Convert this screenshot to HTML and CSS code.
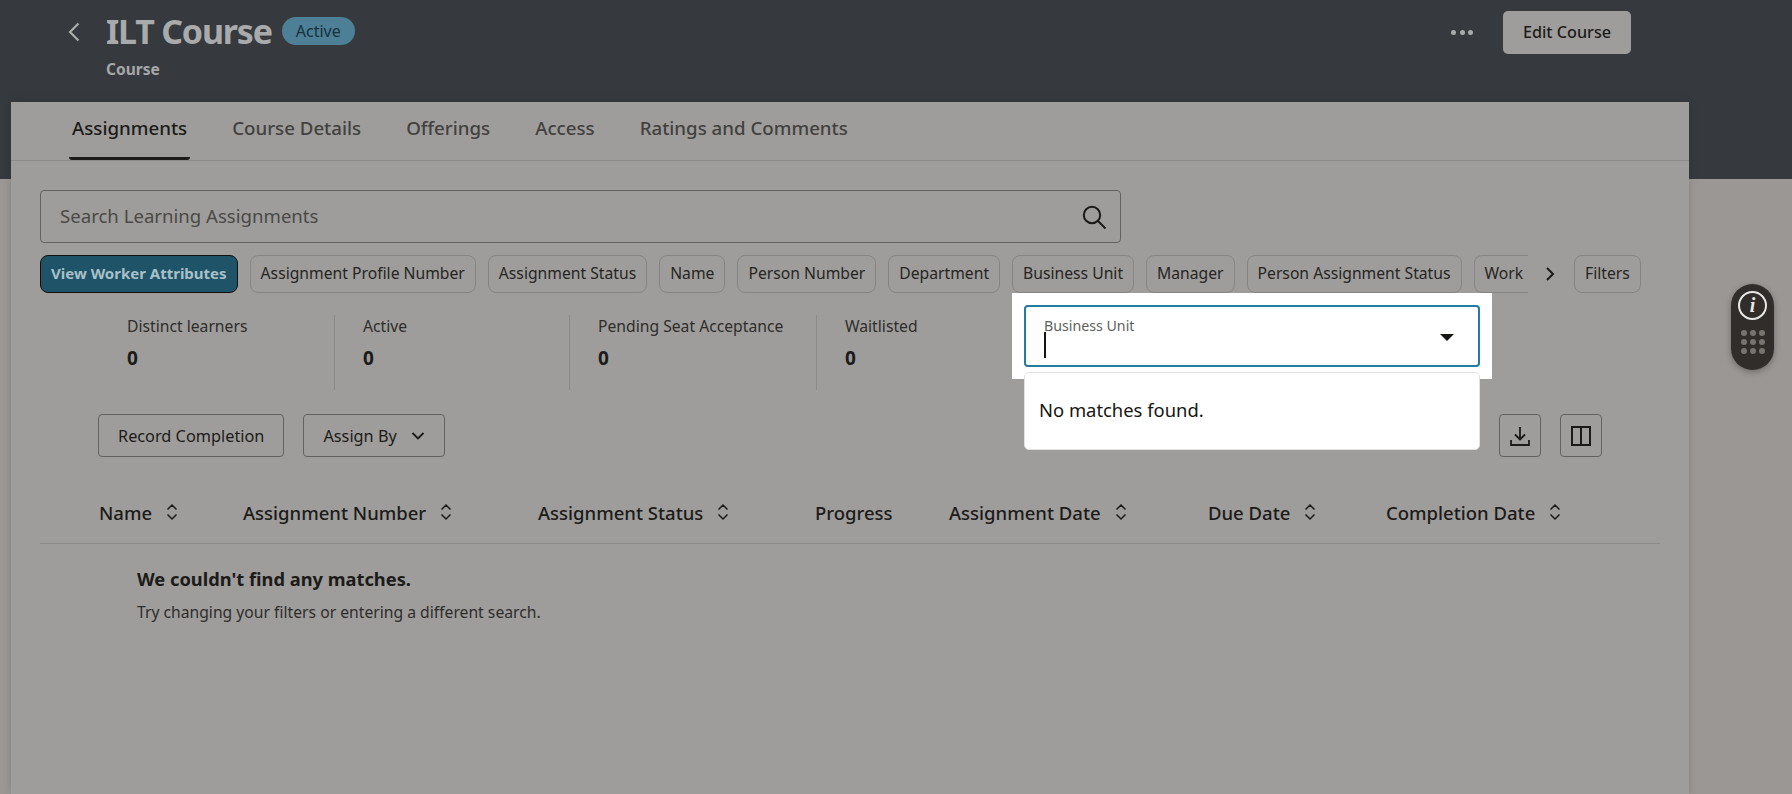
FILE: index.html
```html
<!DOCTYPE html>
<html>
<head>
    <link rel="stylesheet" href="styles.css">
</head>
<body>
    <div class="page">
        <div class="page-header">
            <button class="back-btn">
                <svg width="14" height="20" viewBox="0 0 14 20"><path d="M11.5 1.5 3 10l8.5 8.5" fill="none" stroke="#ababac" stroke-width="2.2"/></svg>
            </button>
            <div class="title-block">
                <div class="title-row">
                    <h1 class="page-title">ILT Course</h1>
                    <span class="status-badge">Active</span>
                </div>
                <div class="page-subtitle">Course</div>
            </div>
            <div class="header-actions">
                <div class="more-dots"><span></span><span></span><span></span></div>
                <button class="edit-btn">Edit Course</button>
            </div>
        </div>

        <div class="panel">
            <div class="tabs">
                <div class="tab tab-active">Assignments</div>
                <div class="tab">Course Details</div>
                <div class="tab">Offerings</div>
                <div class="tab">Access</div>
                <div class="tab">Ratings and Comments</div>
            </div>

            <div class="search-box">
                <span class="search-text">Search Learning Assignments</span>
                <svg width="26" height="26" viewBox="0 0 26 26"><circle cx="11" cy="11" r="8.2" fill="none" stroke="#1b1a19" stroke-width="2"/><path d="m17 17 7.5 7.5" stroke="#1b1a19" stroke-width="2" fill="none"/></svg>
            </div>

            <div class="chip-row">
                <div class="chip-scroll">
                    <div class="chip chip-primary">View Worker Attributes</div>
                    <div class="chip">Assignment Profile Number</div>
                    <div class="chip">Assignment Status</div>
                    <div class="chip">Name</div>
                    <div class="chip">Person Number</div>
                    <div class="chip">Department</div>
                    <div class="chip">Business Unit</div>
                    <div class="chip">Manager</div>
                    <div class="chip">Person Assignment Status</div>
                    <div class="chip chip-cut">Work</div>
                </div>
                <svg class="chip-next" width="12" height="16" viewBox="0 0 12 16"><path d="m3 2 6 6-6 6" fill="none" stroke="#1b1a19" stroke-width="2"/></svg>
                <div class="chip">Filters</div>
            </div>

            <div class="stats">
                <div class="stat stat-1"><div class="stat-label">Distinct learners</div><div class="stat-value">0</div></div>
                <div class="stat stat-2"><div class="stat-label">Active</div><div class="stat-value">0</div></div>
                <div class="stat stat-3"><div class="stat-label">Pending Seat Acceptance</div><div class="stat-value">0</div></div>
                <div class="stat stat-4"><div class="stat-label">Waitlisted</div><div class="stat-value">0</div></div>
            </div>

            <div class="toolbar">
                <button class="tool-btn">Record Completion</button>
                <button class="tool-btn">Assign By
                    <svg width="14" height="10" viewBox="0 0 14 10"><path d="m1.5 2 5.5 5.500 5.500-5.500" fill="none" stroke="#1b1a19" stroke-width="1.800"/></svg>
                </button>
                <div class="toolbar-right">
                    <button class="icon-btn">
                        <svg width="22" height="22" viewBox="0 0 22 22"><path d="M11 2v12M6 9.500l5 5 5-5M2 15v5h18v-5" fill="none" stroke="#1b1a19" stroke-width="1.800"/></svg>
                    </button>
                    <button class="icon-btn">
                        <svg width="22" height="22" viewBox="0 0 22 22"><path d="M2 2h18v18H2zM11 2v18" fill="none" stroke="#1b1a19" stroke-width="2"/></svg>
                    </button>
                </div>
            </div>

            <div class="table-head">
                <div class="th">Name <svg class="sort" width="12" height="18" viewBox="0 0 12 18"><path d="m1.500 6.500 4.500-4.500 4.500 4.500M1.500 11.500l4.500 4.500 4.500-4.500" fill="none" stroke="#1b1a19" stroke-width="1.500"/></svg></div>
                <div class="th">Assignment Number <svg class="sort" width="12" height="18" viewBox="0 0 12 18"><path d="m1.500 6.500 4.500-4.500 4.500 4.500M1.500 11.500l4.500 4.500 4.500-4.500" fill="none" stroke="#1b1a19" stroke-width="1.500"/></svg></div>
                <div class="th">Assignment Status <svg class="sort" width="12" height="18" viewBox="0 0 12 18"><path d="m1.500 6.500 4.500-4.500 4.500 4.500M1.500 11.500l4.500 4.500 4.500-4.500" fill="none" stroke="#1b1a19" stroke-width="1.500"/></svg></div>
                <div class="th">Progress</div>
                <div class="th">Assignment Date <svg class="sort" width="12" height="18" viewBox="0 0 12 18"><path d="m1.500 6.500 4.500-4.500 4.500 4.500M1.500 11.500l4.500 4.500 4.500-4.500" fill="none" stroke="#1b1a19" stroke-width="1.500"/></svg></div>
                <div class="th">Due Date <svg class="sort" width="12" height="18" viewBox="0 0 12 18"><path d="m1.500 6.500 4.500-4.500 4.500 4.500M1.500 11.500l4.500 4.500 4.500-4.500" fill="none" stroke="#1b1a19" stroke-width="1.500"/></svg></div>
                <div class="th">Completion Date <svg class="sort" width="12" height="18" viewBox="0 0 12 18"><path d="m1.500 6.500 4.500-4.500 4.500 4.500M1.500 11.500l4.500 4.500 4.500-4.500" fill="none" stroke="#1b1a19" stroke-width="1.500"/></svg></div>
            </div>

            <div class="empty">
                <div class="empty-title">We couldn't find any matches.</div>
                <div class="empty-text">Try changing your filters or entering a different search.</div>
            </div>
        </div>

        <!-- filter popup, sits over the dimmed page -->
        <div class="filter-popup">
            <div class="filter-input">
                <div class="filter-label">Business Unit</div>
                <div class="filter-cursor"></div>
                <div class="filter-caret"></div>
            </div>
        </div>
        <div class="filter-results">No matches found.</div>

        <div class="help-widget">
            <div class="help-info">i</div>
            <div class="help-dots">
                <span></span><span></span><span></span>
                <span></span><span></span><span></span>
                <span></span><span></span><span></span>
            </div>
        </div>
    </div>
</body>
</html>
```

FILE: styles.css
```css
body {
    margin: 0;
    font-family: "Noto Sans", Arial, sans-serif;
    color: #1c1b1a;
}

button {
    font-family: inherit;
    cursor: pointer;
}

.page {
    position: relative;
    height: 794px;
    overflow: hidden;
    background-color: #9b9795;
}

.page-header {
    display: flex;
    align-items: flex-start;
    height: 179px;
    box-sizing: border-box;
    padding: 0 161px 0 67px;
    background-color: #363a3e;
}

.back-btn {
    padding: 0;
    margin-top: 22px;
    width: 39px;
    height: 20px;
    border: none;
    background: none;
    text-align: left;
}

.title-row {
    display: flex;
    align-items: center;
    gap: 10px;
    height: 62px;
}

.page-title {
    margin: 0;
    font-size: 34px;
    font-weight: 700;
    letter-spacing: -1.2px;
    color: #a9aaab;
}

.status-badge {
    padding: 0 14px;
    height: 28px;
    line-height: 28px;
    border-radius: 14px;
    font-size: 16px;
    background-color: #4d7f96;
    color: #17323e;
}

.page-subtitle {
    margin-top: -4px;
    font-size: 15.500px;
    font-weight: 700;
    color: #a6a7a8;
}

.header-actions {
    display: flex;
    align-items: center;
    gap: 30px;
    margin-left: auto;
    margin-top: 11px;
}

.more-dots {
    display: flex;
    gap: 3.500px;
}

.more-dots span {
    width: 5px;
    height: 5px;
    border-radius: 50%;
    background-color: #a9aaab;
}

.edit-btn {
    width: 128px;
    height: 43px;
    padding-bottom: 2px;
    border: none;
    border-radius: 5px;
    font-size: 16.200px;
    font-weight: 500;
    background-color: #9e9d9b;
    color: #1c1b1a;
}

.panel {
    height: 692px;
    margin: -77px 103px 0 11px;
    background-color: #9e9d9b;
    box-shadow: 0 0 8px rgba(0,0,0,0.15);
}

.tabs {
    display: flex;
    gap: 39px;
    height: 59px;
    box-sizing: border-box;
    padding-left: 58px;
    border-bottom: 1px solid #8c8b89;
}

.tab {
    padding: 13px 3px 0;
    height: 58px;
    box-sizing: border-box;
    font-size: 18.700px;
    font-weight: 500;
    color: #42413f;
}

.tab-active {
    color: #1c1b1a;
    border-bottom: 3px solid #1c1b1a;
    border-radius: 3px;
}

.search-box {
    display: flex;
    align-items: center;
    justify-content: space-between;
    width: 1081px;
    height: 53px;
    box-sizing: border-box;
    margin: 29px 0 0 29px;
    padding: 0 13px 0 19px;
    border: 1px solid #63625f;
    border-radius: 4px;
}

.search-text {
    padding-bottom: 2px;
    font-size: 18.600px;
    color: #4a4947;
}

.chip-row {
    display: flex;
    align-items: center;
    margin: 12px 0 0 29px;
}

.chip-scroll {
    display: flex;
    gap: 12px;
    width: 1488px;
    overflow: hidden;
    flex-shrink: 0;
}

.chip {
    flex-shrink: 0;
    height: 38px;
    line-height: 35px;
    box-sizing: border-box;
    padding: 0 10px;
    border: 1px solid #868583;
    border-radius: 8px;
    font-size: 15.700px;
    color: #262523;
}

.chip-primary {
    border-color: #111;
    font-size: 15px;
    font-weight: 700;
    background-color: #1e5368;
    color: #a9c0c8;
}

/* last chip runs under the scroll edge */
.chip-cut {
    padding-right: 6px;
    border-right: none;
    border-radius: 8px 0 0 8px;
}

.chip-next {
    margin: 0 18px 0 16px;
}

.stats {
    display: flex;
    margin-top: 22px;
    height: 75px;
}

.stat {
    box-sizing: border-box;
    padding-left: 28px;
    border-right: 1px solid #8c8b89;
}

.stat-1 {
    width: 324px;
    padding-left: 116px;
}

.stat-2 {
    width: 235px;
}

.stat-3 {
    width: 247px;
}

.stat-4 {
    border-right: none;
}

.stat-label {
    font-size: 15.700px;
    line-height: 22px;
    color: #2e2d2b;
}

.stat-value {
    margin-top: 9px;
    font-size: 19px;
    font-weight: 700;
    line-height: 24px;
}

.toolbar {
    display: flex;
    gap: 19px;
    margin: 24px 87px 0 87px;
}

.tool-btn {
    display: flex;
    align-items: center;
    gap: 14px;
    height: 43px;
    padding: 0 19px;
    border: 1px solid #63625f;
    border-radius: 4px;
    font-size: 16.300px;
    background: none;
    color: #1c1b1a;
}

.toolbar-right {
    display: flex;
    gap: 19px;
    margin-left: auto;
}

.icon-btn {
    display: flex;
    align-items: center;
    justify-content: center;
    width: 42px;
    height: 43px;
    padding: 0;
    border: 1px solid #63625f;
    border-radius: 4px;
    background: none;
}

.table-head {
    display: grid;
    grid-template-columns: 144px 295px 277px 134px 259px 178px 1fr;
    align-items: center;
    height: 87px;
    box-sizing: border-box;
    margin: 0 29px;
    padding-left: 59px;
    border-bottom: 1px solid #8c8b89;
}

.th {
    display: flex;
    align-items: center;
    gap: 14px;
    padding-top: 24px;
    font-size: 18.500px;
    font-weight: 500;
}

.empty {
    padding: 21px 0 0 126px;
}

.empty-title {
    font-size: 18.300px;
    font-weight: 700;
    line-height: 28px;
}

.empty-text {
    margin-top: 8px;
    font-size: 15.700px;
    line-height: 22px;
    color: #2e2d2b;
}

.filter-popup {
    position: absolute;
    left: 1012px;
    top: 293px;
    width: 480px;
    height: 86px;
    box-sizing: border-box;
    padding: 12px;
    background-color: #fff;
}

.filter-input {
    position: relative;
    width: 456px;
    height: 62px;
    box-sizing: border-box;
    border: 2px solid #227c9f;
    border-radius: 4px;
}

.filter-label {
    position: absolute;
    left: 18px;
    top: 10px;
    font-size: 14.200px;
    line-height: 18px;
    color: #605f5d;
}

.filter-cursor {
    position: absolute;
    left: 18px;
    top: 25px;
    width: 2px;
    height: 26px;
    background-color: #161513;
}

.filter-caret {
    position: absolute;
    right: 24px;
    top: 27px;
    width: 0;
    height: 0;
    border-left: 7px solid transparent;
    border-right: 7px solid transparent;
    border-top: 7px solid #161513;
}

.filter-results {
    position: absolute;
    left: 1024px;
    top: 372px;
    width: 456px;
    height: 78px;
    line-height: 74px;
    box-sizing: border-box;
    padding-left: 14px;
    border: 1px solid #e4e3e2;
    border-radius: 5px;
    font-size: 18.400px;
    background-color: #fff;
    color: #161513;
}

.help-widget {
    position: absolute;
    left: 1731px;
    top: 284px;
    width: 43px;
    height: 86px;
    border-radius: 22px;
    background-color: #312d2a;
    box-shadow: 0 2px 6px rgba(0,0,0,0.3);
}

.help-info {
    width: 25px;
    height: 25px;
    margin: 7px auto 0;
    border: 2px solid #e8e8e8;
    border-radius: 50%;
    text-align: center;
    line-height: 25px;
    font-family: "Liberation Serif", serif;
    font-size: 20px;
    font-style: italic;
    font-weight: 700;
    color: #e8e8e8;
}

.help-dots {
    display: grid;
    grid-template-columns: repeat(3, 6px);
    gap: 3px;
    justify-content: center;
    margin-top: 10px;
}

.help-dots span {
    width: 6px;
    height: 6px;
    border-radius: 50%;
    background-color: #77736f;
}
```
